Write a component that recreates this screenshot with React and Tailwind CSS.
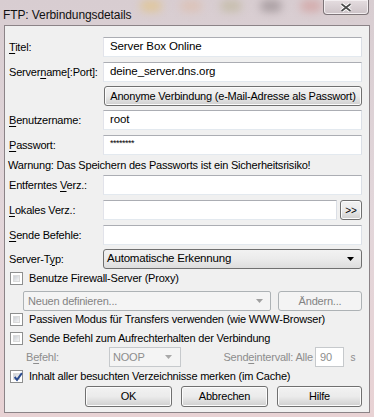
import React from 'react';

const font = { fontFamily: '"Liberation Sans", Arial, sans-serif' };

const U = ({ children }) => <span className="underline underline-offset-2">{children}</span>;

const TextBox = ({ value, className = '' }) => (
  <div className={`h-[20px] bg-white border border-[#abadb3] border-l-[#e2e3ea] border-r-[#dbdfe6] border-b-[#e3e9ef] flex items-center px-[6px] text-[11.5px] tracking-[-0.1px] ${className}`}>
    {value}
  </div>
);

const Button = ({ children, className = '', disabled = false }) => (
  <div
    className={`rounded-[3px] border flex items-center justify-center whitespace-nowrap ${
      disabled
        ? 'border-[#adb2b5] bg-[#f4f4f4] text-[#838383]'
        : 'border-[#707070] bg-gradient-to-b from-[#f2f2f2] via-[#ebebeb] to-[#cfcfcf] shadow-[inset_0_0_0_1px_#fcfcfc]'
    } ${className}`}
  >
    {children}
  </div>
);

const Check = ({ checked = false }) => (
  <div className="w-[13px] h-[13px] border border-[#8e8f8f] bg-white p-[2px] shrink-0">
    <div className="w-full h-full bg-gradient-to-br from-[#cbcfd5] to-[#f6f6f6] border border-[#dadada] relative">
      {checked && (
        <svg viewBox="0 0 9 9" className="absolute -left-[1px] -top-[2px] w-[10px] h-[10px]">
          <path d="M1.5 4.5 L3.6 7 L8 1" fill="none" stroke="#2a4b8e" strokeWidth="1.8" />
        </svg>
      )}
    </div>
  </div>
);

const Arrow = ({ color = '#000' }) => (
  <svg width="7" height="4" viewBox="0 0 7 4">
    <path d="M0 0 H7 L3.5 4 Z" fill={color} />
  </svg>
);

const Row = ({ label, children, className = '' }) => (
  <div className={`flex items-center ${className}`}>
    <div className="w-[97px] shrink-0 pl-[3px] whitespace-nowrap">{label}</div>
    <div className="flex-1">{children}</div>
  </div>
);

export default function App() {
  return (
    <div className="w-[374px] h-[417px] overflow-hidden relative text-[11px] tracking-[-0.2px] text-black bg-gradient-to-b from-[#d8cdd1] via-[#e2d6da] to-[#e8d2d4]" style={font}>
      {/* blurred glass blobs behind title bar */}
      <div className="absolute left-[140px] top-0 flex gap-[18px] opacity-50 blur-[4px]">
        <div className="w-[22px] h-[12px] rounded-full bg-[#e6c06a]" />
        <div className="w-[22px] h-[12px] rounded-full bg-[#e0b9a0]" />
        <div className="w-[22px] h-[12px] rounded-full bg-[#b6b08a]" />
        <div className="w-[22px] h-[12px] rounded-full bg-[#7d7275]" />
        <div className="w-[22px] h-[12px] rounded-full bg-[#d08c88]" />
        <div className="w-[22px] h-[12px] rounded-full bg-[#d9d4a0]" />
      </div>

      <div className="relative h-[25px] flex items-start">
        <div className="pl-[3px] pt-[6px] text-[12px] tracking-[-0.1px] text-[#111]">FTP: Verbindungsdetails</div>
        <div className="absolute left-[323px] top-0 w-[46px] h-[15px] rounded-b-[4px] border border-t-0 border-[#7d7478] bg-gradient-to-b from-[#e5dde0] to-[#cdc3c7] flex items-center justify-center shadow-[inset_0_0_0_1px_#f3eef0]">
          <svg width="12" height="9" viewBox="0 0 12 9">
            <path d="M1.5 1 L10.5 8 M10.5 1 L1.5 8" stroke="#fff" strokeWidth="3.6" />
            <path d="M1.5 1 L10.5 8 M10.5 1 L1.5 8" stroke="#4a4a4a" strokeWidth="1.6" />
          </svg>
        </div>
      </div>

      <div className="ml-[4px] w-[366px] h-[388px] bg-[#f0f0f0] border border-[#8b8387] pt-[11px] pr-[7px] pl-[1px] flex flex-col">
        <Row label={<><U>T</U>itel:</>}>
          <TextBox value="Server Box Online" />
        </Row>
        <Row className="mt-[5px]" label={<>Server<U>n</U>ame[:Port]:</>}>
          <TextBox value="deine_server.dns.org" />
        </Row>
        <div className="mt-[4px] pl-[98px]">
          <Button className="h-[20px]">Anonyme Verbindung (e-Mail-Adresse als Passwort)</Button>
        </div>
        <Row className="mt-[4px]" label={<><U>B</U>enutzername:</>}>
          <TextBox value="root" />
        </Row>
        <Row className="mt-[5px]" label={<><U>P</U>asswort:</>}>
          <TextBox value={<span className="text-[9px] tracking-[-0.5px] -mt-[3px]">********</span>} />
        </Row>
        <div className="h-[20px] flex items-center pl-[2px] whitespace-nowrap">Warnung: Das Speichern des Passworts ist ein Sicherheitsrisiko!</div>
        <Row label={<>Entferntes <U>V</U>erz.:</>}>
          <TextBox value="" />
        </Row>
        <Row className="mt-[5px]" label={<><U>L</U>okales Verz.:</>}>
          <div className="flex gap-[3px] items-center">
            <TextBox value="" className="flex-1" />
            <Button className="w-[22px] h-[20px] text-[10px]">&gt;&gt;</Button>
          </div>
        </Row>
        <Row className="mt-[5px]" label={<><U>S</U>ende Befehle:</>}>
          <TextBox value="" />
        </Row>
        <Row className="mt-[4px]" label={<>Server-T<U>y</U>p:</>}>
          <div className="h-[20px] rounded-[3px] border border-[#707070] bg-gradient-to-b from-[#f2f2f2] via-[#ebebeb] to-[#dddddd] flex items-center justify-between pl-[3px] pr-[7px] text-[11.5px]">
            <span>Automatische Erkennung</span>
            <Arrow />
          </div>
        </Row>
        <div className="mt-[3px] flex items-center gap-[6px] pl-[4px] h-[13px] whitespace-nowrap">
          <Check />
          <span>Benutze Firewall-Server (Proxy)</span>
        </div>
        <div className="mt-[6px] flex items-center pl-[17px] gap-[7px]">
          <div className="w-[248px] h-[20px] rounded-[2px] border border-[#adb2b5] bg-[#f4f4f4] text-[#838383] flex items-center justify-between pl-[4px] pr-[7px]">
            <span>Neuen definieren...</span>
            <Arrow color="#a0a0a0" />
          </div>
          <Button disabled className="flex-1 h-[20px]">Ändern...</Button>
        </div>
        <div className="mt-[2px] flex items-center gap-[6px] pl-[4px] h-[13px] whitespace-nowrap">
          <Check />
          <span>Passiven Modus für Transfers verwenden (wie WWW-Browser)</span>
        </div>
        <div className="mt-[6px] flex items-center gap-[6px] pl-[4px] h-[13px] whitespace-nowrap">
          <Check />
          <span>Sende Befehl zum Aufrechterhalten der Verbindung</span>
        </div>
        <div className="mt-[2px] flex items-center h-[20px] text-[#8d8d8d] whitespace-nowrap">
          <div className="w-[103px] pl-[20px]">B<U>e</U>fehl:</div>
          <div className="w-[72px] h-[20px] border border-[#c6c9cc] bg-[#f4f4f4] flex items-center justify-between pl-[3px] pr-[8px] text-[#8d8d8d]">
            <span>NOOP</span>
            <Arrow color="#a8a8a8" />
          </div>
          <div className="flex-1 text-right pr-[2px]">Send<U>e</U>intervall: Alle</div>
          <div className="w-[29px] h-[20px] border border-[#c6c9cc] bg-white flex items-center pl-[4px] text-[#8d8d8d]">90</div>
          <div className="w-[18px] text-center text-[10px]">s</div>
        </div>
        <div className="mt-[3px] flex items-center gap-[6px] pl-[4px] h-[13px] whitespace-nowrap">
          <Check checked />
          <span>Inhalt aller besuchten Verzeichnisse merken (im Cache)</span>
        </div>
        <div className="mt-[3px] flex justify-end gap-[9px]">
          <Button className="w-[87px] h-[21px] border-[#3c7fb1] shadow-[inset_0_0_0_1px_#9fdcf5,0_0_2px_#6cc4f0]">OK</Button>
          <Button className="w-[87px] h-[21px]">Abbrechen</Button>
          <Button className="w-[85px] h-[21px]">Hilfe</Button>
        </div>
      </div>
    </div>
  );
}
